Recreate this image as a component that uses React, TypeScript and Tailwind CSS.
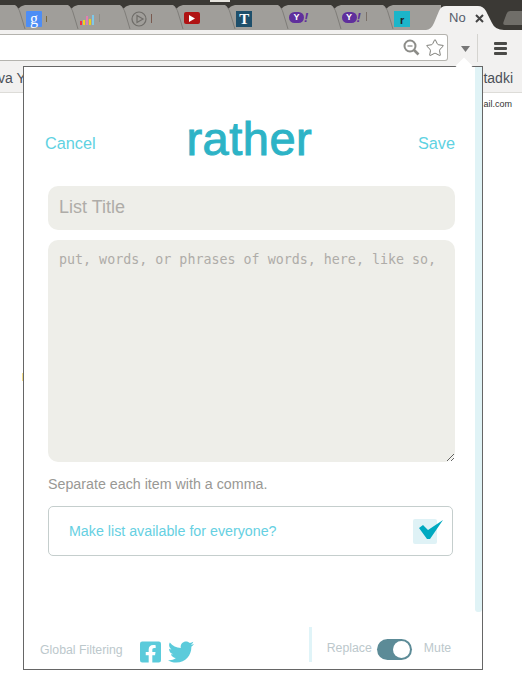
import { FaFacebookSquare, FaTwitter } from "react-icons/fa";
import { Star } from "lucide-react";

const sans = "font-['Liberation_Sans',Arial,sans-serif]";

function Tab({ children }: { children: React.ReactNode }) {
  return (
    <div className="relative flex h-[25px] w-[52.6px] shrink-0 items-start pl-[6px] pt-[6px]">
      {/* notch and divider between two tabs */}
      <svg className="absolute left-[-5px] top-0" width="14" height="25" viewBox="0 0 14 25">
        <path d="M0 0 H10 Q5 1 3.5 4 Q2 1 0 0Z" fill="#3b3935" />
        <path d="M3 3 Q4.5 5 5.5 9 L10 24" fill="none" stroke="#7f7d79" strokeWidth="1" />
      </svg>
      {children}
    </div>
  );
}

function Yahoo() {
  return (
    <div className="flex items-center">
      <div className={`flex h-[11px] w-[15px] items-center justify-center rounded-full bg-[#5f2f9c] text-[9px] font-bold leading-none text-white ${sans}`}>
        Y
      </div>
      <span className={`text-[13px] font-bold italic leading-none text-[#5f2f9c] ${sans}`}>!</span>
    </div>
  );
}

function TabStrip() {
  return (
    <div className="flex h-[30px] overflow-hidden bg-[#3b3935] pt-[5px]">
      <div className="flex h-[25px] w-[441px] shrink-0 bg-[#a09e9a]">
        <div className="w-[20px] shrink-0" />
        <Tab>
          <div className="flex h-[16px] w-[16px] items-center justify-center rounded-[1px] bg-[#4d8df5] text-[16px] leading-none text-white font-['Liberation_Serif',serif]">
            g
          </div>
          <span className="ml-[4px] mt-[5px] h-[6px] w-[1px] bg-[#7a6a40]" />
        </Tab>
        <Tab>
          <svg width="16" height="16" viewBox="0 0 16 16" className="mt-[-1px]">
            <rect x="1" y="11" width="2" height="4" fill="#f0304a" />
            <rect x="4" y="10" width="2" height="5" fill="#f6d21e" />
            <rect x="7" y="6" width="2" height="9" fill="#e27fb0" />
            <rect x="10" y="9" width="2" height="6" fill="#e8d020" />
            <rect x="13" y="5" width="2" height="10" fill="#7ec8e8" />
          </svg>
          <span className="ml-[4px] mt-[3px] h-[8px] w-[1px] bg-[#8f8d86]" />
        </Tab>
        <Tab>
          <svg width="16" height="16" viewBox="0 0 16 16" fill="none" stroke="#6f6d69" strokeWidth="1.2">
            <circle cx="8" cy="8" r="7" />
            <path d="M6 4.5 L12 8 L6 11.5Z" />
          </svg>
          <span className="ml-[4px] mt-[3px] h-[9px] w-[1px] bg-[#7a5a50]" />
        </Tab>
        <Tab>
          <div className="mt-[1px] flex h-[12px] w-[16px] items-center justify-center rounded-[2px] bg-[#b01313]">
            <svg width="6" height="7" viewBox="0 0 6 7">
              <path d="M0 0 L6 3.5 L0 7Z" fill="#fff" />
            </svg>
          </div>
        </Tab>
        <Tab>
          <div className="flex h-[16px] w-[16px] items-center justify-center bg-[#1e4f6b] text-[15px] font-bold leading-none text-white font-['Liberation_Serif',serif]">
            T
          </div>
        </Tab>
        <Tab>
          <Yahoo />
        </Tab>
        <Tab>
          <Yahoo />
          <span className="ml-[5px] mt-[1px] h-[9px] w-[1px] bg-[#7a7068]" />
        </Tab>
        <Tab>
          <div className={`flex h-[16px] w-[16px] items-end justify-center bg-[#1cb5c9] text-[11px] font-bold leading-[13px] text-[#222] ${sans}`}>
            r
          </div>
        </Tab>
      </div>
      <div className="relative h-[25px] w-[66px] shrink-0">
        <svg className="absolute left-[-15px] top-0" width="81" height="25" viewBox="0 0 81 25">
          <path d="M0 25 Q5 25 8 18 L13 6 Q15 1 20 1 H52 Q57 1 60 6 L66 18 Q69 25 78 25Z" fill="#f2f1f0" />
        </svg>
        <div className="relative flex items-center pl-[8px] pt-[5px]">
          <span className={`w-[18px] overflow-hidden text-[13px] leading-[16px] text-[#555d6b] ${sans}`}>No</span>
          <svg className="ml-[8px]" width="9" height="9" viewBox="0 0 9 9" stroke="#444" strokeWidth="2">
            <path d="M1 1 L8 8 M8 1 L1 8" />
          </svg>
        </div>
      </div>
      <div className="ml-[-2px] mt-[6px] h-[14px] w-[30px] shrink-0 -skew-x-[20deg] rounded-[3px] bg-[#706e69]" />
      <div className="absolute left-[210px] top-0 h-[2px] w-[20px] bg-[#e6e4de]" />
    </div>
  );
}

function Toolbar() {
  return (
    <div className="flex h-[32px] items-start bg-[#f2f1f0] pt-[4px]">
      <div className="flex h-[27px] w-[448px] items-center justify-end rounded-r-[3px] border border-l-0 border-[#b4b3ae] bg-white pr-[2px]">
        <svg width="17" height="17" viewBox="0 0 17 17" fill="none" stroke="#8c8c88" strokeWidth="2">
          <circle cx="7" cy="7" r="5.5" />
          <path d="M4.5 7 H9.5" strokeWidth="1.3" />
          <path d="M11 11 L15.5 15.5" strokeWidth="2.6" />
        </svg>
        <Star size={20} strokeWidth={1.2} color="#7d7d78" className="ml-[5px]" />
      </div>
      <svg className="ml-[13px] mt-[12px]" width="9" height="6" viewBox="0 0 9 6">
        <path d="M0 0 H9 L4.5 6Z" fill="#777" />
      </svg>
      <div className="ml-[7px] h-[28px] w-[1px] bg-[#d5d4d0]" />
      <div className="ml-[16px] mt-[8px] flex w-[13px] flex-col gap-[2px]">
        <div className="h-[3px] rounded-[1px] bg-[#4a4a47]" />
        <div className="h-[3px] rounded-[1px] bg-[#4a4a47]" />
        <div className="h-[3px] rounded-[1px] bg-[#4a4a47]" />
      </div>
    </div>
  );
}

function BookmarkBar() {
  return (
    <div className={`flex h-[31px] items-center justify-between border-b border-[#dddcd8] bg-[#f2f1f0] pt-[3px] text-[14px] text-[#4b5058] ${sans}`}>
      <span className="ml-[-2px]">va Y</span>
      <span className="mr-[9px]">tadki</span>
    </div>
  );
}

function Popup() {
  return (
    <div className={`absolute left-[23px] top-[66px] flex h-[604px] w-[460px] flex-col border border-[#666] bg-white ${sans}`}>
      {/* arrow up to the extension button */}
      <div className="absolute left-[434px] top-[-7px] h-[12px] w-[12px] rotate-45 bg-white" />
      {/* scrollbar */}
      <div className="absolute right-0 top-0 h-[545px] w-[7px] rounded-b-[3px] bg-[#e0f3f6]" />

      <div className="flex h-[119px] shrink-0 items-end justify-between pb-[34px] pl-[21px] pr-[27px]">
        <span className="text-[16.3px] leading-[18px] text-[#5fd2e2]">Cancel</span>
        <span className="mb-[-10px] mr-[15px] text-[47px] leading-[46px] tracking-[0.5px] text-[#2db3c6] [-webkit-text-stroke:1px_#2db3c6]">rather</span>
        <span className="text-[16.3px] leading-[18px] text-[#5fd2e2]">Save</span>
      </div>

      <div className="flex flex-col pl-[24px] pr-[27px]">
        <input
          className="h-[44px] w-full rounded-[10px] bg-[#eeeee9] px-[11px] pb-[2px] text-[18px] outline-none placeholder:text-[#aeaca8]"
          placeholder="List Title"
        />
        <textarea
          className="mt-[10px] h-[222px] w-full rounded-[10px] bg-[#eeeee9] px-[11px] pb-[10px] pt-[11px] text-[13.333px] leading-[18px] outline-none placeholder:text-[#aeaca8] font-['DejaVu_Sans_Mono',monospace]"
          placeholder="put, words, or phrases of words, here, like so,"
        />
        <p className="mt-[14px] text-[14.25px] leading-[16px] text-[#999894]">Separate each item with a comma.</p>
        <div className="mr-[2px] mt-[14px] flex h-[50px] items-center justify-between rounded-[5px] border border-[#c5cecd] pl-[20px] pr-[15px]">
          <span className="pt-[2px] text-[14.25px] text-[#66d0e2]">Make list available for everyone?</span>
          <div className="relative h-[25px] w-[24px] rounded-[2px] bg-[#dff2f6]">
            <svg className="absolute left-[6px] top-[1px]" width="25" height="20" viewBox="0 0 25 20">
              <path d="M0 8 L4 5 L9 10 L24 0 L11 19 L8 19Z" fill="#00a9c0" />
            </svg>
          </div>
        </div>
      </div>

      <div className="mt-auto flex h-[42px] items-start">
        <div className="ml-[16px] flex items-center pt-[12px]">
          <span className="mt-[-3px] text-[12.3px] leading-[21px] text-[#bcc8cc]">Global Filtering</span>
          <FaFacebookSquare className="ml-[17px] h-[24px] w-[21px] text-[#5bcbdb]" />
          <FaTwitter className="ml-[7px] h-[26px] w-[26px] text-[#5bcbdb]" />
        </div>
        <div className="ml-[115px] h-[35px] w-[3px] bg-[#e0f4f8]" />
        <div className="ml-[15px] flex items-center pt-[12px]">
          <span className="mt-[-3px] text-[12.3px] leading-[21px] text-[#bcc8cc]">Replace</span>
          <div className="ml-[5px] flex h-[21px] w-[35px] items-center justify-end rounded-full bg-[#5c8b97] pr-[2px]">
            <div className="h-[17px] w-[17px] rounded-full bg-white" />
          </div>
          <span className="ml-[12px] mt-[-3px] text-[12.3px] leading-[21px] text-[#bcc8cc]">Mute</span>
        </div>
      </div>
    </div>
  );
}

export default function App() {
  return (
    <div className="relative h-[696px] w-[522px] overflow-hidden bg-white">
      <TabStrip />
      <Toolbar />
      <BookmarkBar />
      <div className={`flex justify-end pr-[10px] pt-[5px] text-[9px] leading-[12px] text-[#333] ${sans}`}>ail.com</div>
      <div className="absolute left-[22px] top-[373px] h-[8px] w-[1px] bg-[#f3dc86]" />
      <Popup />
    </div>
  );
}
